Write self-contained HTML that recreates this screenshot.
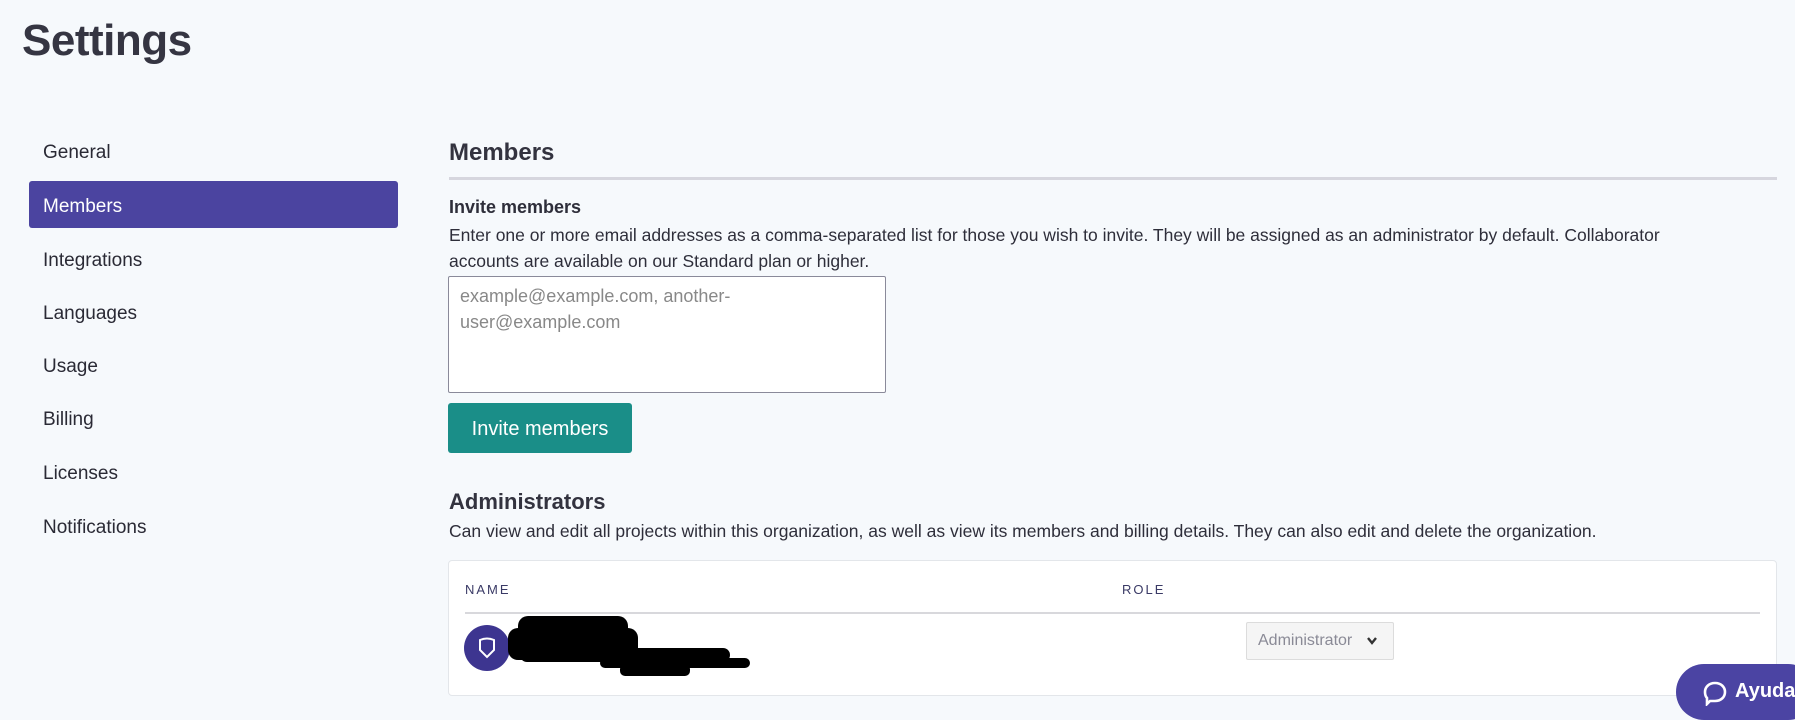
<!DOCTYPE html>
<html><head><meta charset="utf-8"><style>
*{box-sizing:border-box;margin:0;padding:0}
body{width:1795px;height:711px;overflow:hidden;background:#f6f9fc;font-family:"Liberation Sans",sans-serif;color:#2e2e3a;position:relative}
.a{position:absolute;white-space:nowrap}
.nav{left:43px;font-size:19px;color:#2a2a35}
</style></head><body>
<div class="a" style="left:22px;top:16px;font-size:44px;font-weight:bold;color:#353542;letter-spacing:-0.5px">Settings</div>

<div class="a" style="left:29px;top:181px;width:369px;height:47px;background:#4b44a0;border-radius:3px"></div>
<div class="a nav" style="top:142px">General</div>
<div class="a nav" style="top:196px;color:#fff">Members</div>
<div class="a nav" style="top:250px">Integrations</div>
<div class="a nav" style="top:303px">Languages</div>
<div class="a nav" style="top:356px">Usage</div>
<div class="a nav" style="top:409px">Billing</div>
<div class="a nav" style="top:463px">Licenses</div>
<div class="a nav" style="top:517px">Notifications</div>

<div class="a" style="left:449px;top:139px;font-size:24px;font-weight:bold;color:#33333f">Members</div>
<div class="a" style="left:449px;top:177px;width:1328px;height:3px;background:#d6d6de"></div>
<div class="a" style="left:449px;top:197px;font-size:18px;font-weight:bold">Invite members</div>
<div class="a" style="left:449px;top:222px;font-size:17.5px;line-height:26px;white-space:normal;width:1260px">Enter one or more email addresses as a comma-separated list for those you wish to invite. They will be assigned as an administrator by default. Collaborator accounts are available on our Standard plan or higher.</div>
<div class="a" style="left:448px;top:276px;width:438px;height:117px;background:#fff;border:1px solid #8a8a9a;border-radius:2px;padding:6px 11px;font-size:18px;line-height:26px;color:#888;white-space:normal">example@example.com, another-<br>user@example.com</div>
<div class="a" style="left:448px;top:403px;width:184px;height:50px;background:#1a8e88;border-radius:3px;color:#fff;font-size:20px;line-height:52px;text-align:center">Invite members</div>

<div class="a" style="left:449px;top:489px;font-size:22px;font-weight:bold;color:#33333f">Administrators</div>
<div class="a" style="left:449px;top:521px;font-size:17.5px">Can view and edit all projects within this organization, as well as view its members and billing details. They can also edit and delete the organization.</div>

<div class="a" style="left:448px;top:560px;width:1329px;height:136px;background:#fff;border:1px solid #e3e6ea;border-radius:4px"></div>
<div class="a" style="left:465px;top:582px;font-size:13px;letter-spacing:2px;color:#3a3a66">NAME</div>
<div class="a" style="left:1122px;top:582px;font-size:13px;letter-spacing:2px;color:#3a3a66">ROLE</div>
<div class="a" style="left:465px;top:612px;width:1295px;height:2px;background:#d8d8dc"></div>
<div class="a" style="left:464px;top:625px;width:46px;height:46px;border-radius:50%;background:#3d3590"></div>
<svg class="a" style="left:476px;top:635px" width="22" height="26" viewBox="0 0 22 26"><path d="M4 5 Q11 2 18 5 V15 L11 22 L4 15 Z" fill="none" stroke="#fff" stroke-width="2"/></svg>
<div class="a" style="left:518px;top:616px;width:110px;height:22px;background:#000;border-radius:10px"></div>
<div class="a" style="left:508px;top:628px;width:130px;height:32px;background:#000;border-radius:10px"></div>
<div class="a" style="left:520px;top:648px;width:210px;height:14px;background:#000;border-radius:7px"></div>
<div class="a" style="left:600px;top:658px;width:150px;height:10px;background:#000;border-radius:5px"></div>
<div class="a" style="left:620px;top:664px;width:70px;height:12px;background:#000;border-radius:5px"></div>
<div class="a" style="left:1246px;top:622px;width:148px;height:38px;background:#f5f5f5;border:1px solid #dcdcdc;border-radius:2px;font-size:16px;line-height:36px;color:#8a8a96;padding-left:11px">Administrator</div>
<svg class="a" style="left:1366px;top:636px" width="12" height="10" viewBox="0 0 12 10"><path d="M2 2 L6 7 L10 2" fill="none" stroke="#333" stroke-width="2.4"/></svg>
<div class="a" style="left:1676px;top:664px;width:140px;height:56px;background:#4b44a3;border-radius:28px"></div>
<svg class="a" style="left:1702px;top:680px" width="26" height="26" viewBox="0 0 26 26"><path d="M13 3 C19 3 23 7 23 12 C23 17 19 21 13 21 L8 21 L5 24 L5 18 C3.5 16.5 3 14 3 12 C3 7 7 3 13 3 Z" fill="none" stroke="#fff" stroke-width="2.6"/></svg>
<div class="a" style="left:1735px;top:680px;font-size:20px;font-weight:bold;color:#fff">Ayuda</div>
</body></html>
